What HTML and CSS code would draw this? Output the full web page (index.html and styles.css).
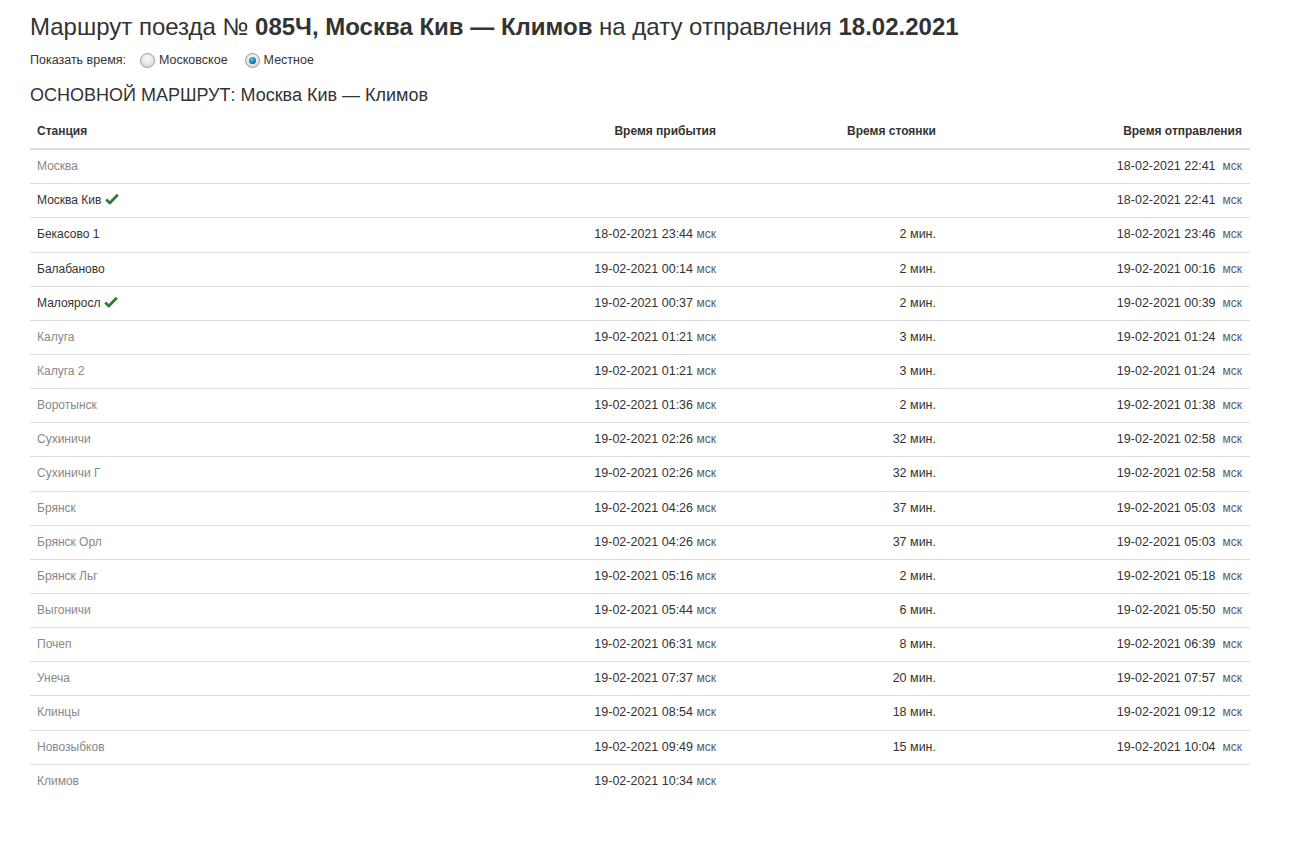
FILE: index.html
```html
<!DOCTYPE html>
<html lang="ru">
<head>
<meta charset="utf-8">
<title>Маршрут поезда</title>
<link rel="stylesheet" href="styles.css">
</head>
<body>
<div class="page">
  <h1 class="title">Маршрут поезда № <b>085Ч, Москва Кив — Климов</b> на дату отправления <b>18.02.2021</b></h1>
  <div class="timemode">
    <span class="label">Показать время:</span>
    <label class="opt"><span class="radio"></span>Московское</label>
    <label class="opt"><span class="radio checked"></span>Местное</label>
  </div>
  <h2 class="subtitle">ОСНОВНОЙ МАРШРУТ: Москва Кив — Климов</h2>
  <table class="route">
    <colgroup>
      <col class="c-st"><col class="c-arr"><col class="c-stop"><col class="c-dep">
    </colgroup>
    <thead>
      <tr><th class="l">Станция</th><th>Время прибытия</th><th>Время стоянки</th><th>Время отправления</th></tr>
    </thead>
    <tbody>
      <tr><td class="st">Москва</td><td></td><td></td><td>18-02-2021 22:41&nbsp; <span class="tz">мск</span></td></tr>
      <tr><td class="st main">Москва Кив <svg class="chk" viewBox="0 0 14 12" width="14" height="12"><path d="M1.2 6.6 L4.8 10 L12.8 1.8" fill="none" stroke="#2f7d3a" stroke-width="2.8" stroke-linejoin="round"/></svg></td><td></td><td></td><td>18-02-2021 22:41&nbsp; <span class="tz">мск</span></td></tr>
      <tr><td class="st main">Бекасово 1</td><td>18-02-2021 23:44 <span class="tz">мск</span></td><td>2 мин.</td><td>18-02-2021 23:46&nbsp; <span class="tz">мск</span></td></tr>
      <tr><td class="st main">Балабаново</td><td>19-02-2021 00:14 <span class="tz">мск</span></td><td>2 мин.</td><td>19-02-2021 00:16&nbsp; <span class="tz">мск</span></td></tr>
      <tr><td class="st main">Малояросл <svg class="chk" viewBox="0 0 14 12" width="14" height="12"><path d="M1.2 6.6 L4.8 10 L12.8 1.8" fill="none" stroke="#2f7d3a" stroke-width="2.8" stroke-linejoin="round"/></svg></td><td>19-02-2021 00:37 <span class="tz">мск</span></td><td>2 мин.</td><td>19-02-2021 00:39&nbsp; <span class="tz">мск</span></td></tr>
      <tr><td class="st">Калуга</td><td>19-02-2021 01:21 <span class="tz">мск</span></td><td>3 мин.</td><td>19-02-2021 01:24&nbsp; <span class="tz">мск</span></td></tr>
      <tr><td class="st">Калуга 2</td><td>19-02-2021 01:21 <span class="tz">мск</span></td><td>3 мин.</td><td>19-02-2021 01:24&nbsp; <span class="tz">мск</span></td></tr>
      <tr><td class="st">Воротынск</td><td>19-02-2021 01:36 <span class="tz">мск</span></td><td>2 мин.</td><td>19-02-2021 01:38&nbsp; <span class="tz">мск</span></td></tr>
      <tr><td class="st">Сухиничи</td><td>19-02-2021 02:26 <span class="tz">мск</span></td><td>32 мин.</td><td>19-02-2021 02:58&nbsp; <span class="tz">мск</span></td></tr>
      <tr><td class="st">Сухиничи Г</td><td>19-02-2021 02:26 <span class="tz">мск</span></td><td>32 мин.</td><td>19-02-2021 02:58&nbsp; <span class="tz">мск</span></td></tr>
      <tr><td class="st">Брянск</td><td>19-02-2021 04:26 <span class="tz">мск</span></td><td>37 мин.</td><td>19-02-2021 05:03&nbsp; <span class="tz">мск</span></td></tr>
      <tr><td class="st">Брянск Орл</td><td>19-02-2021 04:26 <span class="tz">мск</span></td><td>37 мин.</td><td>19-02-2021 05:03&nbsp; <span class="tz">мск</span></td></tr>
      <tr><td class="st">Брянск Льг</td><td>19-02-2021 05:16 <span class="tz">мск</span></td><td>2 мин.</td><td>19-02-2021 05:18&nbsp; <span class="tz">мск</span></td></tr>
      <tr><td class="st">Выгоничи</td><td>19-02-2021 05:44 <span class="tz">мск</span></td><td>6 мин.</td><td>19-02-2021 05:50&nbsp; <span class="tz">мск</span></td></tr>
      <tr><td class="st">Почеп</td><td>19-02-2021 06:31 <span class="tz">мск</span></td><td>8 мин.</td><td>19-02-2021 06:39&nbsp; <span class="tz">мск</span></td></tr>
      <tr><td class="st">Унеча</td><td>19-02-2021 07:37 <span class="tz">мск</span></td><td>20 мин.</td><td>19-02-2021 07:57&nbsp; <span class="tz">мск</span></td></tr>
      <tr><td class="st">Клинцы</td><td>19-02-2021 08:54 <span class="tz">мск</span></td><td>18 мин.</td><td>19-02-2021 09:12&nbsp; <span class="tz">мск</span></td></tr>
      <tr><td class="st">Новозыбков</td><td>19-02-2021 09:49 <span class="tz">мск</span></td><td>15 мин.</td><td>19-02-2021 10:04&nbsp; <span class="tz">мск</span></td></tr>
      <tr class="last"><td class="st">Климов</td><td>19-02-2021 10:34 <span class="tz">мск</span></td><td></td><td></td></tr>
    </tbody>
  </table>
</div>
</body>
</html>
```

FILE: styles.css
```css
html, body {
  margin: 0;
  padding: 0;
  background: #fff;
}
body {
  font-family: "Liberation Sans", Arial, sans-serif;
  color: #333;
}
.page {
  padding: 12px 51px 0 30px;
}
.title {
  margin: 0;
  font-size: 24px;
  line-height: 30px;
  font-weight: normal;
  color: #333;
}
.title b {
  font-weight: bold;
}
.timemode {
  display: flex;
  align-items: center;
  height: 20px;
  margin-top: 8px;
  font-size: 12.5px;
  color: #333;
}
.timemode .label {
  margin-right: 14px;
}
.opt {
  display: flex;
  align-items: center;
  margin-right: 17px;
}
.radio {
  box-sizing: border-box;
  width: 15px;
  height: 15px;
  border-radius: 50%;
  border: 1px solid #9a9a9a;
  background: radial-gradient(circle at 50% 35%, #fafafa 0%, #e4e4e4 55%, #cfcfcf 100%);
  margin-right: 4px;
  position: relative;
}
.radio.checked::after {
  content: "";
  position: absolute;
  left: 3px;
  top: 3px;
  width: 7px;
  height: 7px;
  border-radius: 50%;
  background: radial-gradient(circle at 40% 35%, #6ec3ef 0%, #1f7fb8 50%, #0a3f66 100%);
}
.subtitle {
  margin: 14px 0 0 0;
  font-size: 18px;
  line-height: 22px;
  font-weight: normal;
  color: #333;
}
.route {
  width: 1220px;
  margin-top: 9px;
  border-collapse: collapse;
  font-size: 12px;
  line-height: 1.428571;
}
.c-st { width: 440px; }
.c-arr { width: 254px; }
.c-stop { width: 220px; }
.c-dep { width: 306px; }
.route th {
  text-align: right;
  font-weight: bold;
  color: #333;
  padding: 8px;
  border-bottom: 2px solid #ddd;
  vertical-align: bottom;
}
.route th.l {
  text-align: left;
  padding-left: 7px;
}
.route td {
  text-align: right;
  padding: 8px;
  border-bottom: 1px solid #ddd;
  vertical-align: top;
  color: #333;
  white-space: nowrap;
}
.route td:not(.st) {
  font-size: 12.5px;
  line-height: 17.14px;
}
.route tr.last td {
  border-bottom: none;
}
.route td.st {
  text-align: left;
  padding-left: 7px;
  color: #888;
}
.route td.st.main {
  color: #333;
}
.tz {
  color: #555b6a;
  font-size: 12px;
}
.chk {
  vertical-align: -1px;
  margin-left: 0;
}
```
